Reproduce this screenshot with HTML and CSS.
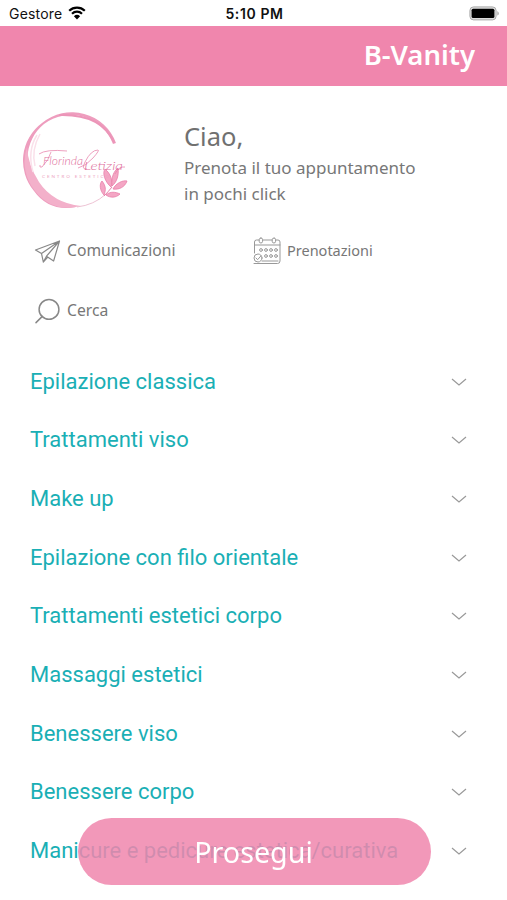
FILE: index.html
```html
<!DOCTYPE html>
<html lang="it">
  <head>
    <meta charset="UTF-8" />
    <meta name="viewport" content="width=device-width, initial-scale=1.0" />
    <title>B-Vanity</title>
    <link rel="stylesheet" href="styles.css">
  </head>
  <body>
    <div class="status-bar">
      <div class="carrier">
        <span>Gestore</span>
        <svg class="wifi" viewBox="0 0 18 14" width="18" height="14">
          <path d="M1.2 4.7a11.2 11.2 0 0 1 15.6 0M4 7.7a7.1 7.1 0 0 1 10 0" />
          <path class="dot" d="M5.9 10.2a4.5 4.5 0 0 1 6.2 0L9 13.6z" />
        </svg>
      </div>
      <span class="clock">5:10 PM</span>
      <svg class="battery" viewBox="0 0 31 15" width="31" height="15">
        <rect x="0.9" y="0.9" width="26.2" height="13" rx="3.6" fill="#ddd" stroke="#aaa" />
        <rect x="2.6" y="2.7" width="22.8" height="9.4" rx="1.5" />
        <path d="M28.3 5.2c2 .7 2 3.7 0 4.4z" fill="#aaa" />
      </svg>
    </div>

    <header>B-Vanity</header>

    <main>
      <div class="intro">
        <svg class="logo" viewBox="0 0 110 106" width="110" height="106">
          <path d="M94 32A47 47 0 0 0 20 12A47 47 0 0 0 12 80Q27 101 54 96Q32 94 19 80A45 45 0 0 1 22 13A45 45 0 0 1 91 33z" fill="#ee9dbe" />
          <path d="M5 36A46 46 0 0 0 13 80Q30 102 59 95Q31 92 17 71Q6 54 5 36z" fill="#f3b0ca" />
          <path d="M38 4Q79 3 92 31" fill="none" stroke="#ec95b8" stroke-width="2" stroke-linecap="round" />
          <path d="M15 24Q5 40 11 61M18 23Q9 39 13 55" fill="none" stroke="#fae0ea" stroke-width="1.5" />
          <path d="M55 96Q72 94 84 83" fill="none" stroke="#e9b4c9" stroke-width="0.8" />
          <g fill="#f4a6c4" stroke="#e87fa9" stroke-width="0.8">
            <path d="M89 76C83 71 80 62 83 58C89 63 91 70 89 76z" />
            <path d="M90 75C89 66 92 60 96 57C97 64 95 71 90 75z" />
            <path d="M91 78C94 72 101 69 105 70C103 76 97 79 91 78z" />
            <path d="M82 84C78 80 77 73 80 70C84 75 84 79 82 84z" />
            <path d="M84 84C88 80 94 81 98 83C94 87 88 87 84 84z" />
          </g>
          <path d="M82 85Q86 81 90 76" fill="none" stroke="#e87fa9" />
          <path d="M17 43Q24 38 45 40M29 41Q27 49 20 56Q17 57 18 54M56 57Q64 55 71 47T76 39Q69 39 63 51Q59 59 65 58M93 63Q97 55 103 56" fill="none" stroke="#e888ae" stroke-width="0.8" />
          <text class="logo-name" x="21" y="54" textLength="40" lengthAdjust="spacingAndGlyphs">Florinda</text>
          <text class="logo-name" x="62" y="59" textLength="39" lengthAdjust="spacingAndGlyphs">Letizia</text>
          <text class="logo-sub" x="20" y="67" textLength="67">CENTRO ESTETICO</text>
        </svg>
        <div class="greeting">
          <h1>Ciao,</h1>
          <p>Prenota il tuo appuntamento<br>in pochi click</p>
        </div>
      </div>

      <div class="actions">
        <a class="action">
          <svg viewBox="0 0 28 28" width="28" height="28">
            <path d="M26.5 4L2.5 13L8.5 16.5L26.5 4L13.5 19.2L20.6 24L26.5 4zM8.5 16.5L10.3 25L13.5 19.2M10.3 25L14.8 20.2" />
          </svg>
          <span>Comunicazioni</span>
        </a>
        <a class="action booking">
          <svg viewBox="0 0 28 28" width="28" height="28">
            <path d="M1.5 16V5Q1.5 3 3.5 3H6M10 3H19M23 3H25Q27 3 27 5V24Q27 26.5 24.5 26.5H6M1.5 8H27M9 24H25" />
            <rect x="6.2" y="1" width="3.4" height="5" rx="1.7" />
            <rect x="19.2" y="1" width="3.4" height="5" rx="1.7" />
            <g class="days">
              <circle cx="8" cy="13" r="1.4" /><circle cx="13" cy="13" r="1.4" /><circle cx="18" cy="13" r="1.4" /><circle cx="23" cy="13" r="1.4" />
              <circle cx="13" cy="19" r="1.4" /><circle cx="18" cy="19" r="1.4" /><circle cx="23" cy="19" r="1.4" />
            </g>
            <circle cx="5" cy="21" r="4" />
            <path d="M3 21L4.6 22.7L8 18.8M1 26.5H6" />
          </svg>
          <span>Prenotazioni</span>
        </a>
        <a class="action">
          <svg class="search" viewBox="0 0 28 28" width="28" height="28">
            <circle cx="16" cy="12.4" r="9.9" />
            <path d="M9.3 19.4L3 25.6" />
          </svg>
          <span>Cerca</span>
        </a>
      </div>

      <ul class="services">
        <li><span>Epilazione classica</span><svg viewBox="0 0 16 8" width="16" height="8"><path d="M1 1L8 7L15 1" /></svg></li>
        <li><span>Trattamenti viso</span><svg viewBox="0 0 16 8" width="16" height="8"><path d="M1 1L8 7L15 1" /></svg></li>
        <li><span>Make up</span><svg viewBox="0 0 16 8" width="16" height="8"><path d="M1 1L8 7L15 1" /></svg></li>
        <li><span>Epilazione con filo orientale</span><svg viewBox="0 0 16 8" width="16" height="8"><path d="M1 1L8 7L15 1" /></svg></li>
        <li><span>Trattamenti estetici corpo</span><svg viewBox="0 0 16 8" width="16" height="8"><path d="M1 1L8 7L15 1" /></svg></li>
        <li><span>Massaggi estetici</span><svg viewBox="0 0 16 8" width="16" height="8"><path d="M1 1L8 7L15 1" /></svg></li>
        <li><span>Benessere viso</span><svg viewBox="0 0 16 8" width="16" height="8"><path d="M1 1L8 7L15 1" /></svg></li>
        <li><span>Benessere corpo</span><svg viewBox="0 0 16 8" width="16" height="8"><path d="M1 1L8 7L15 1" /></svg></li>
        <li><span>Manicure e pedicure estetica/curativa</span><svg viewBox="0 0 16 8" width="16" height="8"><path d="M1 1L8 7L15 1" /></svg></li>
      </ul>
    </main>

    <button class="continue">Prosegui</button>
  </body>
</html>
```
FILE: styles.css
```css
* {
  box-sizing: border-box;
}

body {
  font-family: "Noto Sans", sans-serif;
  margin: 0;
  height: 900px;
  overflow: hidden;
  background-color: #fff;
  color: #777;
}

/* Status bar */
.status-bar {
  display: grid;
  grid-template-columns: 1fr auto 1fr;
  align-items: center;
  height: 26px;
  padding: 1px 7px 0 9px;
  font-family: Inter, sans-serif;
  font-size: 14px;
  color: #111;
}

.carrier {
  display: flex;
  align-items: center;
  gap: 6px;
  letter-spacing: 0.2px;
}

.wifi {
  margin-top: -2px;
  fill: none;
  stroke: #000;
  stroke-width: 2.2;
}

.wifi .dot {
  fill: #000;
  stroke: none;
}

.clock {
  font-weight: 600;
  letter-spacing: 0.6px;
}

.battery {
  justify-self: end;
}

header {
  height: 60px;
  padding-right: 32px;
  background-color: #f086ad;
  color: #fff;
  font-size: 27.5px;
  font-weight: 600;
  line-height: 58px;
  text-align: right;
}

/* Logo and greeting */
.intro {
  display: flex;
  height: 144px;
  padding: 25px 0 0 22px;
}

.logo-name {
  font-family: Lato, sans-serif;
  font-size: 12px;
  font-style: italic;
  font-weight: 300;
  fill: #e06f9c;
}

.logo-sub {
  font-family: Lato, sans-serif;
  font-size: 4.6px;
  fill: #eda3c0;
}

.greeting {
  margin-left: 52px;
  padding-top: 7px;
}

.greeting h1 {
  margin: 0;
  font-size: 25.5px;
  font-weight: 400;
  line-height: 37px;
  color: #707070;
}

.greeting p {
  margin: 0;
  font-size: 17px;
  line-height: 26px;
}

/* Shortcuts */
.actions {
  display: grid;
  grid-template-columns: 220px 1fr;
  grid-auto-rows: 42px;
  row-gap: 18px;
  padding-left: 33px;
}

.action {
  display: flex;
  align-items: center;
  gap: 6px;
  font-size: 15.7px;
}

.action span {
  margin-top: -2px;
}

.action svg {
  fill: none;
  stroke: #888;
  stroke-width: 1.2;
  stroke-linejoin: round;
  stroke-linecap: round;
}

.action .search {
  stroke-width: 1.5;
}

.booking {
  font-size: 14.5px;
}

.booking svg {
  stroke: #999;
  stroke-width: 1;
}

/* Services */
.services {
  list-style: none;
  margin: 20px 0 0;
  padding: 0 40px 0 30px;
}

.services li {
  display: flex;
  align-items: center;
  justify-content: space-between;
  height: 58.67px;
  font-family: Roboto, sans-serif;
  font-size: 22px;
  color: #1aafb5;
}

.services svg {
  margin-top: 1px;
  fill: none;
  stroke: #999;
  stroke-width: 1.2;
}

.continue {
  position: fixed;
  left: 78px;
  bottom: 15px;
  width: 353px;
  height: 67px;
  padding: 0 2px 0 0;
  border: none;
  border-radius: 34px;
  background-color: rgba(240, 134, 173, 0.85);
  color: #fff;
  font-family: "Noto Sans", sans-serif;
  font-size: 28.7px;
}
```
